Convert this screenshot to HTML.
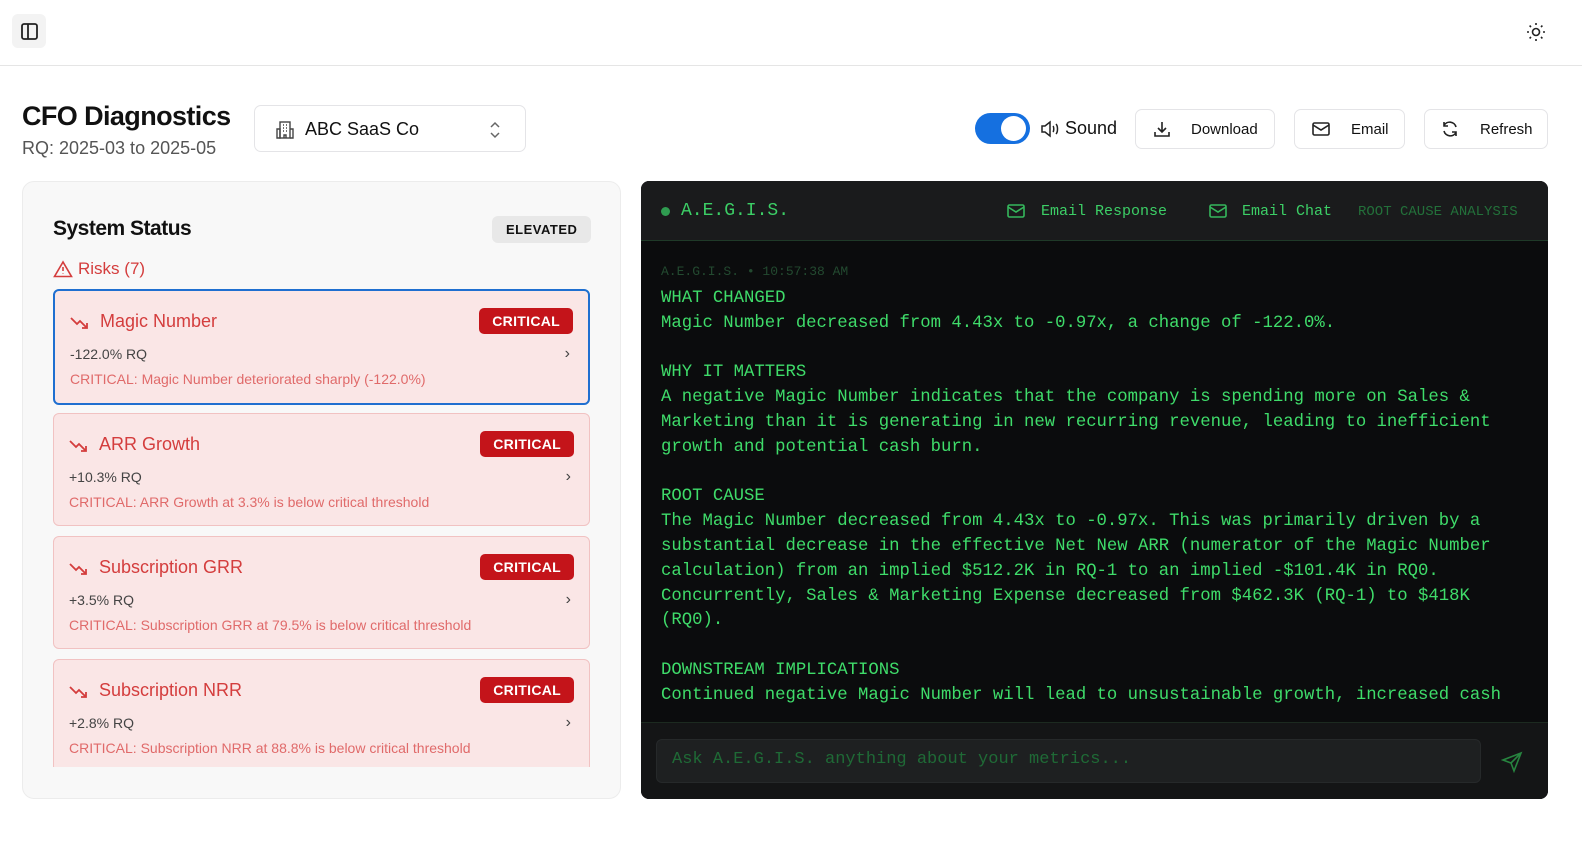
<!DOCTYPE html>
<html><head><style>
*{box-sizing:border-box;margin:0;padding:0}
body{width:1582px;height:850px;background:#fff;font-family:"Liberation Sans",sans-serif;position:relative;overflow:hidden;color:#111}
.abs{position:absolute}
.mono{font-family:"Liberation Mono",monospace}
.btn{position:absolute;top:109px;height:40px;border:1px solid #e4e4e7;border-radius:7px;display:flex;align-items:center;font-size:15px;color:#111}
.card{position:absolute;left:53px;width:537px;height:113px;background:#fae6e6;border:1px solid #f1c2c2;border-radius:6px}
.card .t{position:absolute;left:15px;top:20px;font-size:18px;color:#d43d3d;display:flex;align-items:center;gap:10px}
.card .b{position:absolute;right:15px;top:17px;background:#c4141a;color:#fff;font-weight:bold;font-size:14px;padding:5px 13px;border-radius:5px;letter-spacing:.3px}
.card .v{position:absolute;left:15px;top:55px;font-size:14px;color:#444}
.card .d{position:absolute;left:15px;top:80px;font-size:14px;color:#e06a6a}
.card .c{position:absolute;right:18px;top:54px;font-size:16px;color:#444}
.g{color:#3fdc6a}
</style></head><body>
<div class="abs" style="left:0;top:0;width:1582px;height:66px;border-bottom:1px solid #e5e5e5"></div>
<div class="abs" style="left:12px;top:14px;width:34px;height:34px;background:#f3f3f3;border-radius:6px">
<svg width="34" height="34" viewBox="0 0 34 34"><rect x="10" y="10" width="15" height="15" rx="2" fill="none" stroke="#222" stroke-width="1.8"/><line x1="16" y1="10" x2="16" y2="25" stroke="#222" stroke-width="1.8"/></svg></div>
<svg class="abs" style="left:1526px;top:22px" width="20" height="20" viewBox="0 0 20 20" fill="none" stroke="#222" stroke-width="1.6"><circle cx="10" cy="10" r="3.5"/><path d="M10 1v2M10 17v2M1 10h2M17 10h2M3.6 3.6l1.4 1.4M15 15l1.4 1.4M3.6 16.4L5 15M15 5l1.4-1.4"/></svg>

<div class="abs" style="left:22px;top:101px;font-size:27px;font-weight:bold;letter-spacing:-.6px">CFO Diagnostics</div>
<div class="abs" style="left:22px;top:138px;font-size:18px;color:#555">RQ: 2025-03 to 2025-05</div>
<div class="abs" style="left:254px;top:105px;width:272px;height:47px;border:1px solid #e4e4e7;border-radius:7px">
<svg class="abs" style="left:20px;top:14px" width="20" height="20" viewBox="0 0 20 20" fill="none" stroke="#444" stroke-width="1.4"><rect x="5" y="2" width="10" height="16"/><path d="M2 9h3v9H2zM15 9h3v9h-3M8 5h1M11 5h1M8 8h1M11 8h1M8 11h1M11 11h1M9 18v-3h2v3"/></svg>
<div class="abs" style="left:50px;top:13px;font-size:18px">ABC SaaS Co</div>
<svg class="abs" style="left:232px;top:14px" width="16" height="20" viewBox="0 0 16 20" fill="none" stroke="#666" stroke-width="1.5"><path d="M4 7l4-4 4 4M4 13l4 4 4-4"/></svg></div>

<div class="abs" style="left:975px;top:113px;width:55px;height:31px;background:#1570e0;border-radius:16px"><div class="abs" style="left:26px;top:3px;width:25px;height:25px;background:#fff;border-radius:50%"></div></div>
<svg class="abs" style="left:1039px;top:119px" width="22" height="20" viewBox="0 0 22 20" fill="none" stroke="#222" stroke-width="1.5"><path d="M3 7h3l5-4v14l-5-4H3z"/><path d="M14 7c1 1 1 5 0 6M17 5c2 2 2 8 0 10"/></svg>
<div class="abs" style="left:1065px;top:118px;font-size:18px">Sound</div>
<div class="btn" style="left:1135px;width:140px"><svg style="margin-left:17px" width="18" height="18" viewBox="0 0 18 18" fill="none" stroke="#222" stroke-width="1.6"><path d="M9 2v10M5 8l4 4 4-4M2 12v4h14v-4"/></svg><span style="margin-left:20px">Download</span></div>
<div class="btn" style="left:1294px;width:111px"><svg style="margin-left:16px" width="20" height="18" viewBox="0 0 20 18" fill="none" stroke="#222" stroke-width="1.6"><rect x="2" y="3" width="16" height="12" rx="1.5"/><path d="M2 5l8 5 8-5"/></svg><span style="margin-left:20px">Email</span></div>
<div class="btn" style="left:1424px;width:124px"><svg style="margin-left:15px" width="20" height="20" viewBox="0 0 20 20" fill="none" stroke="#222" stroke-width="1.6"><path d="M16 8A6.5 6.5 0 0 0 4 6.5M4 12a6.5 6.5 0 0 0 12 1.5M4 3v4h4M16 17v-4h-4"/></svg><span style="margin-left:20px">Refresh</span></div>

<div class="abs" style="left:22px;top:181px;width:599px;height:618px;background:#f8f8f8;border:1px solid #ececec;border-radius:12px;overflow:hidden">
<div class="abs" style="left:30px;top:35px;font-size:21px;font-weight:bold;letter-spacing:-.5px">System Status</div>
<div class="abs" style="left:469px;top:34px;background:#e8e8e8;border-radius:6px;padding:6px 14px;font-size:13px;font-weight:bold;letter-spacing:.5px">ELEVATED</div>
<div class="abs" style="left:30px;top:77px;display:flex;align-items:center;gap:5px;color:#d43d3d;font-size:17px"><svg width="20" height="18" viewBox="0 0 20 18" fill="none" stroke="#d43d3d" stroke-width="1.6"><path d="M10 2L1.5 16.5h17z"/><path d="M10 7v4M10 13.5v.5"/></svg>Risks (7)</div>
</div>
<svg width="0" height="0" style="position:absolute"><symbol id="tr" viewBox="0 0 20 14"><path d="M1 3l6 6 3-3 7 7M12 13h5V8" fill="none" stroke="#d43d3d" stroke-width="1.8"/></symbol></svg>
<div class="card" style="top:289px;height:116px;border:2px solid #1f6fd0"><div class="t"><svg width="20" height="14"><use href="#tr"/></svg>Magic Number</div><div class="b">CRITICAL</div><div class="v">-122.0% RQ</div><div class="c">›</div><div class="d">CRITICAL: Magic Number deteriorated sharply (-122.0%)</div></div>
<div class="card" style="top:413px"><div class="t"><svg width="20" height="14"><use href="#tr"/></svg>ARR Growth</div><div class="b">CRITICAL</div><div class="v">+10.3% RQ</div><div class="c">›</div><div class="d">CRITICAL: ARR Growth at 3.3% is below critical threshold</div></div>
<div class="card" style="top:536px"><div class="t"><svg width="20" height="14"><use href="#tr"/></svg>Subscription GRR</div><div class="b">CRITICAL</div><div class="v">+3.5% RQ</div><div class="c">›</div><div class="d">CRITICAL: Subscription GRR at 79.5% is below critical threshold</div></div>
<div class="abs" style="left:53px;top:659px;width:537px;height:108px;overflow:hidden"><div class="card" style="left:0;top:0"><div class="t"><svg width="20" height="14"><use href="#tr"/></svg>Subscription NRR</div><div class="b">CRITICAL</div><div class="v">+2.8% RQ</div><div class="c">›</div><div class="d">CRITICAL: Subscription NRR at 88.8% is below critical threshold</div></div></div>

<div class="abs mono" style="left:641px;top:181px;width:907px;height:618px;background:#0b0c0d;border-radius:8px;overflow:hidden">
<div class="abs" style="left:0;top:0;width:907px;height:60px;background:#1a1b1c;border-bottom:1px solid #1f3a28"></div>
<div class="abs" style="left:20px;top:26px;width:9px;height:9px;border-radius:50%;background:#2f9c50"></div>
<div class="abs g" style="left:40px;top:20px;font-size:18px;color:#3ccf66">A.E.G.I.S.</div>
<svg class="abs" style="left:365px;top:21px" width="20" height="18" viewBox="0 0 20 18" fill="none" stroke="#35b85c" stroke-width="1.6"><rect x="2" y="3" width="16" height="12" rx="1.5"/><path d="M2 5l8 5 8-5"/></svg>
<div class="abs" style="left:400px;top:22px;font-size:15px;color:#3ccf66">Email Response</div>
<svg class="abs" style="left:567px;top:21px" width="20" height="18" viewBox="0 0 20 18" fill="none" stroke="#35b85c" stroke-width="1.6"><rect x="2" y="3" width="16" height="12" rx="1.5"/><path d="M2 5l8 5 8-5"/></svg>
<div class="abs" style="left:601px;top:22px;font-size:15px;color:#3ccf66">Email Chat</div>
<div class="abs" style="left:717px;top:23px;font-size:14px;color:#23703a">ROOT CAUSE ANALYSIS</div>
<div class="abs" style="left:20px;top:83px;font-size:13px;color:#234a30">A.E.G.I.S. • 10:57:38 AM</div>
<div class="abs g" style="left:20px;top:106px;width:880px;height:416px;overflow:hidden;font-size:17.3px;line-height:24.8px;white-space:pre">WHAT CHANGED
Magic Number decreased from 4.43x to -0.97x, a change of -122.0%.

WHY IT MATTERS
A negative Magic Number indicates that the company is spending more on Sales &amp;
Marketing than it is generating in new recurring revenue, leading to inefficient
growth and potential cash burn.

ROOT CAUSE
The Magic Number decreased from 4.43x to -0.97x. This was primarily driven by a
substantial decrease in the effective Net New ARR (numerator of the Magic Number
calculation) from an implied $512.2K in RQ-1 to an implied -$101.4K in RQ0.
Concurrently, Sales &amp; Marketing Expense decreased from $462.3K (RQ-1) to $418K
(RQ0).

DOWNSTREAM IMPLICATIONS
Continued negative Magic Number will lead to unsustainable growth, increased cash</div>
<div class="abs" style="left:0;top:541px;width:907px;height:77px;background:#141516;border-top:1px solid #1c2a20"></div>
<div class="abs" style="left:15px;top:558px;width:825px;height:44px;background:#1e2021;border:1px solid #26292a;border-radius:6px"></div>
<div class="abs" style="left:31px;top:569px;font-size:17px;color:#1f6a36">Ask A.E.G.I.S. anything about your metrics...</div>
<svg class="abs" style="left:860px;top:570px" width="22" height="22" viewBox="0 0 22 22" fill="none" stroke="#27843f" stroke-width="1.6"><path d="M20 2L2 9l8 3 3 8z M20 2L10 12"/></svg>
</div>
</body></html>
